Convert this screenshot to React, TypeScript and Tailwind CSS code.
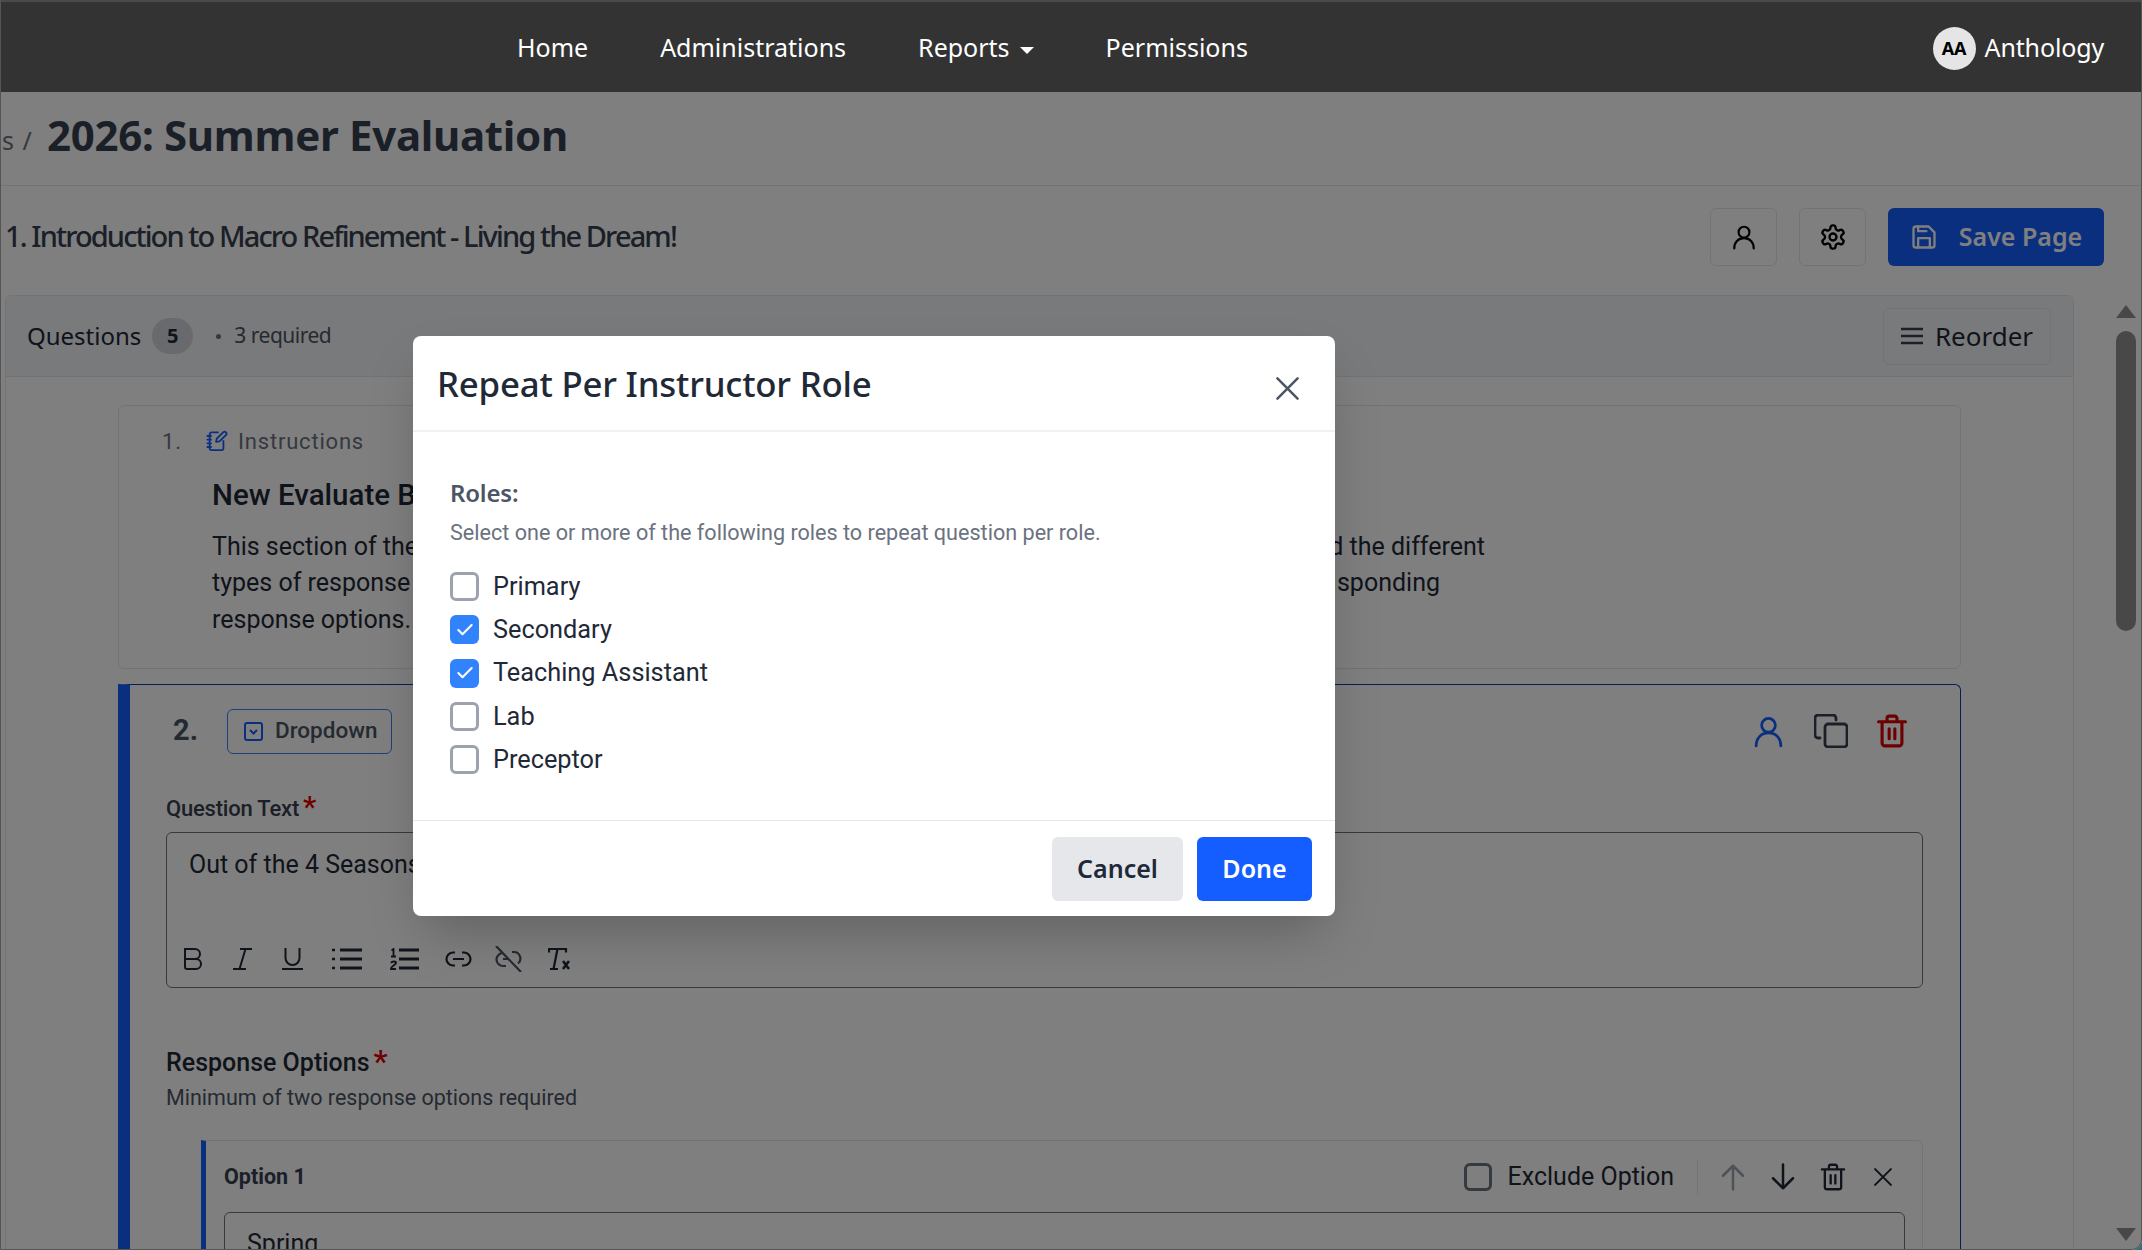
import type { ReactNode } from "react";
import { Check } from "lucide-react";

const noto = "font-['Noto_Sans','Open_Sans',sans-serif]";
const roboto = "font-['Roboto',sans-serif]";

function Icon({ size, children, className }: { size: number; children: ReactNode; className?: string }) {
  return (
    <svg width={size} height={size} viewBox="0 0 24 24" fill="none" stroke="currentColor" strokeWidth={2} strokeLinecap="round" strokeLinejoin="round" className={className}>
      {children}
    </svg>
  );
}

const UserIcon = ({ size, className }: { size: number; className?: string }) => (
  <Icon size={size} className={className}>
    <circle cx="12" cy="7.500" r="5" />
    <path d="M3 22.500c0-5.500 3.500-9.500 9-9.500s9 4 9 9.500" />
  </Icon>
);

const TrashIcon = ({ size, className, strokeWidth = 2 }: { size: number; className?: string; strokeWidth?: number }) => (
  <svg width={size} height={size} viewBox="0 0 24 24" fill="none" stroke="currentColor" strokeWidth={strokeWidth} strokeLinecap="round" strokeLinejoin="round" className={className}>
    <path d="M2.500 5.500h19M5 5.500v15a2 2 0 0 0 2 2h10a2 2 0 0 0 2-2v-15M8.500 5.500V3a1.500 1.500 0 0 1 1.500-1.500h4A1.500 1.500 0 0 1 15.500 3v2.500M10 10.500v7M14 10.500v7" />
  </svg>
);

const CloseIcon = ({ size, className, strokeWidth = 2.600 }: { size: number; className?: string; strokeWidth?: number }) => (
  <svg width={size} height={size} viewBox="0 0 24 24" fill="none" stroke="currentColor" strokeWidth={strokeWidth} strokeLinecap="round" className={className}>
    <path d="M1.500 1.500l21 21M22.500 1.500l-21 21" />
  </svg>
);

function Toolbar() {
  return (
    <div className="flex items-center h-[34px] pl-[17px] text-[#1f2937]">
      <svg width="18" height="22" viewBox="0 0 18 22" fill="none" stroke="currentColor" strokeWidth="2" className="mr-[31px]"><path d="M1 1h10a5 5 0 0 1 0 10H1zM1 11h11a5 5 0 0 1 0 10H3a2 2 0 0 1-2-2z" /></svg>
      <svg width="19" height="22" viewBox="0 0 19 22" fill="none" stroke="currentColor" strokeWidth="2" className="mr-[30px]"><path d="M7 1h12M0 21h13M12.500 1 6.500 21" /></svg>
      <svg width="21" height="22" viewBox="0 0 21 22" fill="none" stroke="currentColor" strokeWidth="2" className="mr-[29px]"><path d="M3.500 0v10a7 7 0 0 0 14 0V0M0 21h21" /></svg>
      <svg width="30" height="22" viewBox="0 0 30 22" fill="none" stroke="currentColor" strokeWidth="3" className="mr-[28px]"><path d="M8 2h22M8 11h22M8 20h22" /><path d="M0 2h3M0 11h3M0 20h3" strokeWidth="2.400" /></svg>
      <svg width="29" height="22" viewBox="0 0 29 22" fill="none" stroke="currentColor" strokeWidth="3" className="mr-[26px]"><path d="M9 2h20M9 11h20M9 20h20" /><path d="M1.500 2.500 3.500 1v7M1 8.500h5M1 15c1-2 5-2 5 0s-5 3-5 6h5" strokeWidth="1.800" /></svg>
      <svg width="27" height="16" viewBox="0 0 27 16" fill="none" stroke="currentColor" strokeWidth="2.200" className="mr-[23px]"><path d="M10 1.500H8a6.500 6.500 0 0 0 0 13h2M17 1.500h2a6.500 6.500 0 0 1 0 13h-2M8 8h11" /></svg>
      <svg width="27" height="26" viewBox="0 0 27 26" fill="none" stroke="#4b5563" strokeWidth="2.200" className="mr-[26px]"><path d="M8 7a6.500 6.500 0 0 0 0 13h3M17 6h2a6.500 6.500 0 0 1 4 11.500M8 13h6M1 0l25 26" /></svg>
      <svg width="22" height="22" viewBox="0 0 22 22" fill="none" stroke="currentColor" strokeWidth="2.200"><path d="M1 4.500V1h17v3.500M9.500 1l-4 20M2 21h8" /><path d="M15 13l6 8M21 13l-6 8" strokeWidth="2.600" /></svg>
    </div>
  );
}

function Role({ label, checked }: { label: string; checked?: boolean }) {
  return (
    <div className="flex items-center gap-[14px] h-[43.300px]">
      {checked ? (
        <span className="w-[29px] h-[29px] rounded-[6px] bg-[#3182fd] flex items-center justify-center text-white">
          <Check size={20} strokeWidth={2.500} />
        </span>
      ) : (
        <span className="w-[29px] h-[29px] rounded-[6px] border-[3px] border-[#9ca3af] bg-white" />
      )}
      <span className={`${roboto} text-[25.300px] text-[#1f2937]`}>{label}</span>
    </div>
  );
}

function TextLine({ left, right, width }: { left: string; right?: string; width: number }) {
  return (
    <div className="flex justify-between h-[36.500px] items-center whitespace-nowrap" style={{ width }}>
      <span>{left}</span>
      {right && <span>{right}</span>}
    </div>
  );
}

export default function App() {
  return (
    <div className="w-[2142px] h-[1250px] bg-[#2f6f80]">
      <div className={`relative w-full h-full overflow-hidden bg-white rounded-br-[10px] flex flex-col ${roboto}`}>
        {/* Navbar */}
        <nav className={`relative z-20 h-[92px] shrink-0 bg-[#333333] border-t-2 border-[#4a4a4a] flex items-center pl-[517px] pr-[38px] pt-[2px] text-white text-[25px] ${noto}`}>
          <div className="flex items-center gap-[72px] flex-1">
            <span>Home</span>
            <span>Administrations</span>
            <span className="flex items-center gap-[10px]">
              Reports
              <span className="w-0 h-0 border-x-[7px] border-x-transparent border-t-[7px] border-t-white mt-[4px]" />
            </span>
            <span>Permissions</span>
          </div>
          <div className="flex items-center gap-[9px]">
            <span className="w-[43px] h-[43px] rounded-full bg-[#e5e5e5] text-black text-[18px] font-bold flex items-center justify-center">AA</span>
            <span className="tracking-[-0.15px]">Anthology</span>
          </div>
        </nav>

        {/* Page header */}
        <div className={`h-[94px] shrink-0 border-b border-[#e5e7eb] flex items-center pl-[2px] pb-[8px] ${noto}`}>
          <span className="w-[45px] text-[25px] tracking-[1px] text-[#6b7280] mt-[13px]">s /</span>
          <h1 className="text-[42px] font-bold text-[#374151] tracking-[-0.3px]">2026: Summer Evaluation</h1>
        </div>

        {/* Section title row */}
        <div className={`h-[109px] shrink-0 flex items-center justify-between pl-[5px] pr-[38px] pb-[7px] ${noto}`}>
          <h2 className="text-[29px] font-medium text-[#374151] tracking-[-1.900px] mb-[2px]">1. Introduction to Macro Refinement - Living the Dream!</h2>
          <div className="flex items-center gap-[22px]">
            <button className="w-[67px] h-[58px] border border-[#e5e7eb] rounded-[6px] flex items-center justify-center text-black"><UserIcon size={26} /></button>
            <button className="w-[67px] h-[58px] border border-[#e5e7eb] rounded-[6px] flex items-center justify-center text-black">
              <svg width="28" height="28" viewBox="0 0 24 24" fill="none" stroke="currentColor" strokeWidth="2" strokeLinecap="round" strokeLinejoin="round">
                <path d="M12.220 2h-.440a2 2 0 0 0-2 2v.180a2 2 0 0 1-1 1.730l-.430.250a2 2 0 0 1-2 0l-.150-.080a2 2 0 0 0-2.730.730l-.220.380a2 2 0 0 0 .730 2.730l.150.100a2 2 0 0 1 1 1.720v.510a2 2 0 0 1-1 1.740l-.150.090a2 2 0 0 0-.730 2.730l.220.380a2 2 0 0 0 2.730.730l.150-.080a2 2 0 0 1 2 0l.430.250a2 2 0 0 1 1 1.730V20a2 2 0 0 0 2 2h.440a2 2 0 0 0 2-2v-.180a2 2 0 0 1 1-1.730l.430-.250a2 2 0 0 1 2 0l.150.080a2 2 0 0 0 2.730-.730l.220-.390a2 2 0 0 0-.730-2.730l-.150-.080a2 2 0 0 1-1-1.740v-.500a2 2 0 0 1 1-1.740l.150-.090a2 2 0 0 0 .730-2.730l-.220-.380a2 2 0 0 0-2.730-.730l-.150.080a2 2 0 0 1-2 0l-.430-.250a2 2 0 0 1-1-1.730V4a2 2 0 0 0-2-2z" />
                <circle cx="12" cy="12" r="3" />
              </svg>
            </button>
            <button className="w-[216px] h-[58px] rounded-[6px] bg-[#145eff] flex items-center justify-center gap-[21px] text-white text-[25px] font-semibold">
              <svg width="28" height="28" viewBox="0 0 24 24" fill="none" stroke="currentColor" strokeWidth="2" strokeLinejoin="round" strokeLinecap="round">
                <path d="M3 5a2 2 0 0 1 2-2h11l5 5v11a2 2 0 0 1-2 2H5a2 2 0 0 1-2-2z" />
                <path d="M7 21v-8h10v8M7 3v4h7" />
              </svg>
              Save Page
            </button>
          </div>
        </div>

        {/* Scroll area */}
        <div className="flex-1 min-h-0 flex pl-[5px] pr-[6px]">
          <div className="w-[2069px] border-x border-t border-[#e5e7eb] rounded-t-[6px] flex flex-col">
            <div className={`h-[81px] shrink-0 bg-[#f3f4f6] border-b border-[#e5e7eb] flex items-center justify-between pl-[21px] pr-[22px] ${noto}`}>
              <div className="flex items-center">
                <span className="text-[24px] text-[#1f2937]">Questions</span>
                <span className="ml-[11px] w-[41px] h-[36px] rounded-full bg-[#d1d5db] text-[#1f2937] text-[20px] font-bold flex items-center justify-center">5</span>
                <span className="ml-[23px] w-[5px] h-[5px] rounded-full bg-[#6b7280]" />
                <span className="ml-[13px] text-[21px] text-[#4b5563] tracking-[-0.5px]">3 required</span>
              </div>
              <button className="w-[168px] h-[57px] border border-[#e5e7eb] rounded-[6px] flex items-center justify-center gap-[12px] text-[26px] text-[#1f2937]">
                <svg width="22" height="20" viewBox="0 0 22 20" fill="none" stroke="#374151" strokeWidth="2.400"><path d="M0 3h22M0 10h22M0 17h22" /></svg>
                Reorder
              </button>
            </div>

            <div className="flex-1 min-h-0 overflow-hidden pt-[28px] pl-[112px] pr-[112px]">
              {/* Question 1 */}
              <div className="h-[264px] border border-[#e5e7eb] rounded-[6px] pl-[43px] pt-[19px]">
                <div className="flex items-center text-[22px] tracking-[0.8px] text-[#6b7280] h-[32px]">
                  <span className="w-[44px]">1.</span>
                  <svg width="22" height="22" viewBox="0 0 24 24" fill="none" stroke="#145eff" strokeWidth="2" strokeLinecap="round" strokeLinejoin="round" className="mr-[10px]">
                    <path d="M13 2.500H6a2 2 0 0 0-2 2V20a2 2 0 0 0 2 2h11a2 2 0 0 0 2-2v-8" />
                    <path d="M1.500 6.500h4M1.500 10.500h4M1.500 14.500h4M1.500 18.500h4" />
                    <path d="M11 13l.7-3.500 7-7a2 2 0 0 1 3 3l-7 7z" />
                  </svg>
                  Instructions
                </div>
                <div className="ml-[50px] mt-[17px]">
                  <div className="text-[29.500px] font-medium text-[#1f2937] h-[42px] leading-[42px] whitespace-nowrap">New Evaluate Builder</div>
                  <div className="mt-[12px] text-[25px] text-[#1f2937]">
                    <TextLine left="This section of the evaluation" right="d the different" width={1273} />
                    <TextLine left="types of response questions" right="sponding" width={1228} />
                    <TextLine left="response options." width={600} />
                  </div>
                </div>
              </div>

              {/* Question 2 */}
              <div className="mt-[15px] border-t border-r border-[#0f3bb0] border-l-[12px] border-l-[#145eff] rounded-tr-[6px] pl-[36px] pr-[37px] h-[600px]">
                <div className="flex items-center justify-between h-[92px]">
                  <div className="flex items-center">
                    <span className="w-[61px] text-[#4b5563] text-[29px] font-bold pl-[7px]">2.</span>
                    <span className="h-[45px] w-[165px] rounded-[6px] border border-[#3b82f6] flex items-center pl-[16px] gap-[12px] text-[22.500px] font-medium text-[#4b5563]">
                      <svg width="19" height="19" viewBox="0 0 19 19" fill="none" stroke="#145eff" strokeWidth="2"><rect x="1" y="1" width="17" height="17" rx="2" /><path d="m6 8 3.500 3.500L13 8" /></svg>
                      Dropdown
                    </span>
                  </div>
                  <div className="flex items-center pr-[14px]">
                    <UserIcon size={33} className="text-[#145eff] mr-[29px]" />
                    <svg width="34" height="34" viewBox="0 0 34 34" fill="none" stroke="#374151" strokeWidth="2.800" strokeLinecap="round" strokeLinejoin="round" className="mr-[27px]"><rect x="11" y="10" width="22" height="23" rx="3" /><path d="M6 24H4a3 3 0 0 1-3-3V4a3 3 0 0 1 3-3h15a3 3 0 0 1 3 3v2" /></svg>
                    <TrashIcon size={34} className="text-[#dc0000]" strokeWidth={2.200} />
                  </div>
                </div>

                <div className="flex items-start h-[36px] text-[22px] font-medium text-[#374151] mt-[15px] tracking-[-0.2px]">
                  Question Text<span className="text-[#e00000] text-[30px] leading-[24px] ml-[4px] mt-[3px]">*</span>
                </div>
                <div className="mt-[4px] h-[156px] border border-[#6b7280] rounded-[6px] flex flex-col justify-between pb-[11px]">
                  <div className="pl-[22px] pt-[13px] text-[25px] text-[#1f2937]">Out of the 4 Seasons, which one is your favorite?</div>
                  <Toolbar />
                </div>

                <div className="mt-[56px] flex items-start h-[36px] text-[25px] font-medium text-[#1f2937]">
                  Response Options<span className="text-[#e00000] text-[32px] leading-[26px] ml-[4px] mt-[4px]">*</span>
                </div>
                <div className="mt-[2px] text-[21.500px] text-[#4b5563]">Minimum of two response options required</div>

                <div className="mt-[26px] ml-[35px] border-t border-r border-[#e5e7eb] border-l-[5px] border-l-[#145eff] rounded-tr-[6px] pl-[18px] pr-[17px]">
                  <div className="h-[71px] flex items-center justify-between">
                    <span className="text-[21.500px] font-bold text-[#374151]">Option 1</span>
                    <div className="flex items-center">
                      <span className="w-[28px] h-[28px] rounded-[6px] border-[3px] border-[#6b7280]" />
                      <span className="ml-[16px] text-[25px] text-[#1f2937]">Exclude Option</span>
                      <span className="ml-[23px] w-px h-[36px] bg-[#e5e7eb]" />
                      <svg width="30" height="30" viewBox="0 0 24 24" fill="none" stroke="#9ca3af" strokeWidth="2" strokeLinecap="round" strokeLinejoin="round" className="ml-[20px]"><path d="M12 22V3M4 11l8-8 8 8" /></svg>
                      <svg width="30" height="30" viewBox="0 0 24 24" fill="none" stroke="#1f2937" strokeWidth="2" strokeLinecap="round" strokeLinejoin="round" className="ml-[20px]"><path d="M12 2v19M4 13l8 8 8-8" /></svg>
                      <TrashIcon size={28} className="text-[#1f2937] ml-[21px]" />
                      <CloseIcon size={18} strokeWidth={2.800} className="text-[#1f2937] ml-[27px] mr-[13px]" />
                    </div>
                  </div>
                  <div className="h-[80px] border border-[#6b7280] rounded-[6px] pl-[22px] pt-[12px] text-[25px] text-[#1f2937]">Spring</div>
                </div>
              </div>
            </div>
          </div>

          {/* Scrollbar */}
          <div className="ml-[42px] w-[20px] flex flex-col items-center pt-[10px]">
            <span className="w-0 h-0 border-x-[10px] border-x-transparent border-b-[13px] border-b-[#909090]" />
            <span className="mt-[13px] w-[20px] h-[300px] rounded-full bg-[#909090]" />
            <span className="mt-auto mb-[9px] w-0 h-0 border-x-[10px] border-x-transparent border-t-[13px] border-t-[#909090]" />
          </div>
        </div>

        {/* Backdrop */}
        <div className="absolute inset-x-0 top-[92px] bottom-0 z-10 bg-black/50" />

        {/* Modal */}
        <div className="absolute z-30 left-[413px] top-[336px] w-[922px] h-[580px] bg-white rounded-[8px] shadow-2xl flex flex-col">
          <div className="h-[96px] shrink-0 border-b-2 border-[#f0f1f3] flex items-center justify-between pl-[24px] pr-[36px]">
            <h3 className={`${noto} text-[34.800px] font-medium text-[#1f2937] tracking-[-0.2px] mt-[2px]`}>Repeat Per Instructor Role</h3>
            <CloseIcon size={23} className="text-[#4b5563] mt-[10px]" />
          </div>
          <div className="flex-1 pl-[37px] pt-[45px]">
            <div className={`${noto} text-[24px] font-semibold text-[#4b5563] h-[32px] leading-[32px] tracking-[-0.2px]`}>Roles:</div>
            <div className="mt-[8px] text-[21.600px] text-[#6b7280] h-[32px] leading-[32px]">Select one or more of the following roles to repeat question per role.</div>
            <div className="mt-[16px]">
              <Role label="Primary" />
              <Role label="Secondary" checked />
              <Role label="Teaching Assistant" checked />
              <Role label="Lab" />
              <Role label="Preceptor" />
            </div>
          </div>
          <div className={`h-[96px] shrink-0 border-t border-[#e5e7eb] flex items-center justify-end gap-[14px] pr-[23px] ${noto}`}>
            <button className="w-[131px] h-[64px] rounded-[6px] bg-[#e5e7eb] text-[25px] font-semibold text-[#1f2937]">Cancel</button>
            <button className="w-[115px] h-[64px] rounded-[6px] bg-[#145eff] text-[25px] font-semibold text-white">Done</button>
          </div>
        </div>

        {/* Window edge */}
        <div className="absolute inset-0 z-40 border-x border-b border-[#555555] rounded-br-[10px] pointer-events-none" />
      </div>
    </div>
  );
}
